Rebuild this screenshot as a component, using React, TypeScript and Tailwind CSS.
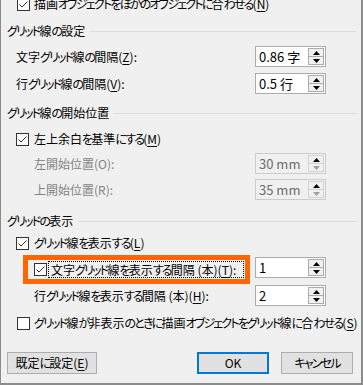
import React from "react";

const FONT =
  "font-['Noto_Sans_CJK_JP',sans-serif] [font-feature-settings:'palt'] text-[12px] leading-none text-black";

function J({ t }: { t: string }) {
  const parts = t.split(/([\u3040-\u30ff]+)/);
  return (
    <>
      {parts.map((p, i) =>
        /^[\u3040-\u30ff]+$/.test(p) ? (
          <span key={i} className="tracking-[-1.8px]">
            {p}
          </span>
        ) : (
          <React.Fragment key={i}>{p}</React.Fragment>
        )
      )}
    </>
  );
}

function Check({ checked }: { checked?: boolean }) {
  return (
    <span className="w-[13px] h-[13px] border border-[#333333] bg-white flex items-center justify-center shrink-0">
      {checked && (
        <svg width="11" height="11" viewBox="0 0 11 11">
          <path d="M1.5 5.5 L4 8 L9.5 2.5" stroke="#333333" strokeWidth="1" fill="none" />
        </svg>
      )}
    </span>
  );
}

function Arrow({ up, color }: { up?: boolean; color: string }) {
  return (
    <svg width="7" height="4" viewBox="0 0 7 4">
      <path d={up ? "M0 4 L3.5 0 L7 4 Z" : "M0 0 L7 0 L3.5 4 Z"} fill={color} />
    </svg>
  );
}

function Spin({ value, disabled }: { value: string; disabled?: boolean }) {
  return (
    <div
      className={
        "w-[71px] h-[21px] border flex p-[1px] " +
        (disabled ? "border-[#cccccc] bg-[#f0f0f0]" : "border-[#acacac] bg-white")
      }
    >
      <span
        className={
          "flex-1 flex items-center pl-[2px] text-[13px] " +
          (disabled ? "text-[#6d6d6d]" : "text-black")
        }
      >
        {value}
      </span>
      <div className="w-[16px] flex flex-col">
        <div
          className={
            "flex-1 border flex items-center justify-center " +
            (disabled ? "border-[#d4d4d4] bg-[#f0f0f0]" : "border-[#acacac] bg-[#f0f0f0]")
          }
        >
          <Arrow up color="#000000" />
        </div>
        <div
          className={
            "flex-1 border border-t-0 flex items-center justify-center " +
            (disabled ? "border-[#d4d4d4] bg-[#f0f0f0]" : "border-[#acacac] bg-[#f0f0f0]")
          }
        >
          <Arrow color={disabled ? "#a0a0a0" : "#000000"} />
        </div>
      </div>
    </div>
  );
}

function Header({ text, className }: { text: string; className: string }) {
  return (
    <div className={"flex items-center h-[18px] pl-[6px] pr-[5px] " + className}>
      <span className="whitespace-nowrap">
        <J t={text} />
      </span>
      <div className="flex-1 h-px bg-[#dcdcdc] ml-[5px]" />
    </div>
  );
}

function U({ c }: { c: string }) {
  return <span className="underline underline-offset-[2px]">{c}</span>;
}

export default function App() {
  return (
    <div
      className={
        "w-[363px] h-[385px] bg-[#f0f0f0] border-l border-r-2 border-b-2 border-[#8c8c8c] overflow-hidden flex flex-col " +
        FONT
      }
    >
      <div className="flex items-center h-[18px] mt-[-5px] pl-[16px] gap-[4px] shrink-0">
        <Check checked />
        <span className="whitespace-nowrap">
          <J t="描画オブジェクトをほかのオブジェクトに合わせる" />(<U c="N" />)
        </span>
      </div>

      <Header text="グリッド線の設定" className="mt-[9px] shrink-0" />

      <div className="flex items-center h-[21px] mt-[6px] shrink-0">
        <div className="w-[254px] pl-[15px] whitespace-nowrap">
          <J t="文字グリッド線の間隔" />(<U c="Z" />):
        </div>
        <Spin value="0.86 字" />
      </div>
      <div className="flex items-center h-[21px] mt-[6px] shrink-0">
        <div className="w-[254px] pl-[15px] whitespace-nowrap">
          <J t="行グリッド線の間隔" />(<U c="V" />):
        </div>
        <Spin value="0.5 行" />
      </div>

      <Header text="グリッド線の開始位置" className="mt-[10px] shrink-0" />

      <div className="flex items-center h-[18px] mt-[8px] pl-[15px] gap-[5px] shrink-0">
        <Check checked />
        <span className="whitespace-nowrap">
          <J t="左上余白を基準にする" />(<U c="M" />)
        </span>
      </div>
      <div className="flex items-center h-[21px] mt-[5px] shrink-0">
        <div className="w-[254px] pl-[33px] whitespace-nowrap text-[#838383]">左開始位置(O):</div>
        <Spin value="30 mm" disabled />
      </div>
      <div className="flex items-center h-[21px] mt-[5px] shrink-0">
        <div className="w-[254px] pl-[33px] whitespace-nowrap text-[#838383]">上開始位置(R):</div>
        <Spin value="35 mm" disabled />
      </div>

      <Header text="グリッドの表示" className="mt-[12px] shrink-0" />

      <div className="flex items-center h-[18px] mt-[4px] pl-[15px] gap-[5px] shrink-0">
        <Check checked />
        <span className="whitespace-nowrap">
          <J t="グリッド線を表示する" />(<U c="L" />)
        </span>
      </div>

      <div className="flex h-[29px] mt-[3px] shrink-0">
        <div className="ml-[22px] w-[227px] h-[29px] border-[5px] border-[#ff6600] flex items-center pl-[6px] pr-[1px]">
          <Check checked />
          <div className="ml-[1px] flex-1 h-[17px] border border-dotted border-black flex items-center pl-[2px] whitespace-nowrap">
            <J t="文字グリッド線を表示する間隔" /> (本)(<U c="T" />):
          </div>
        </div>
        <div className="ml-[5px] mt-[2px]">
          <Spin value="1" />
        </div>
      </div>

      <div className="flex items-center h-[21px] mt-[1px] shrink-0">
        <div className="w-[254px] pl-[33px] whitespace-nowrap">
          <J t="行グリッド線を表示する間隔" /> (本)(<U c="H" />):
        </div>
        <Spin value="2" />
      </div>

      <div className="flex items-center h-[18px] mt-[8px] pl-[16px] gap-[4px] shrink-0">
        <Check />
        <span className="whitespace-nowrap">
          <J t="グリッド線が非表示のときに描画オブジェクトをグリッド線に合わせる" />(<U c="S" />)
        </span>
      </div>

      <div className="flex h-[22px] mt-[20px] pl-[6px] pr-[8px] shrink-0">
        <button className="w-[90px] h-[22px] border border-[#adadad] bg-[#e1e1e1] flex items-center justify-center">
          <J t="既定に設定" />(<U c="E" />)
        </button>
        <button className="ml-auto w-[72px] h-[22px] border-2 border-[#0078d7] bg-[#e1e1e1] flex items-center justify-center">
          OK
        </button>
        <button className="ml-[12px] w-[72px] h-[22px] border border-[#adadad] bg-[#e1e1e1] flex items-center justify-center">
          <J t="キャンセル" />
        </button>
      </div>
    </div>
  );
}
